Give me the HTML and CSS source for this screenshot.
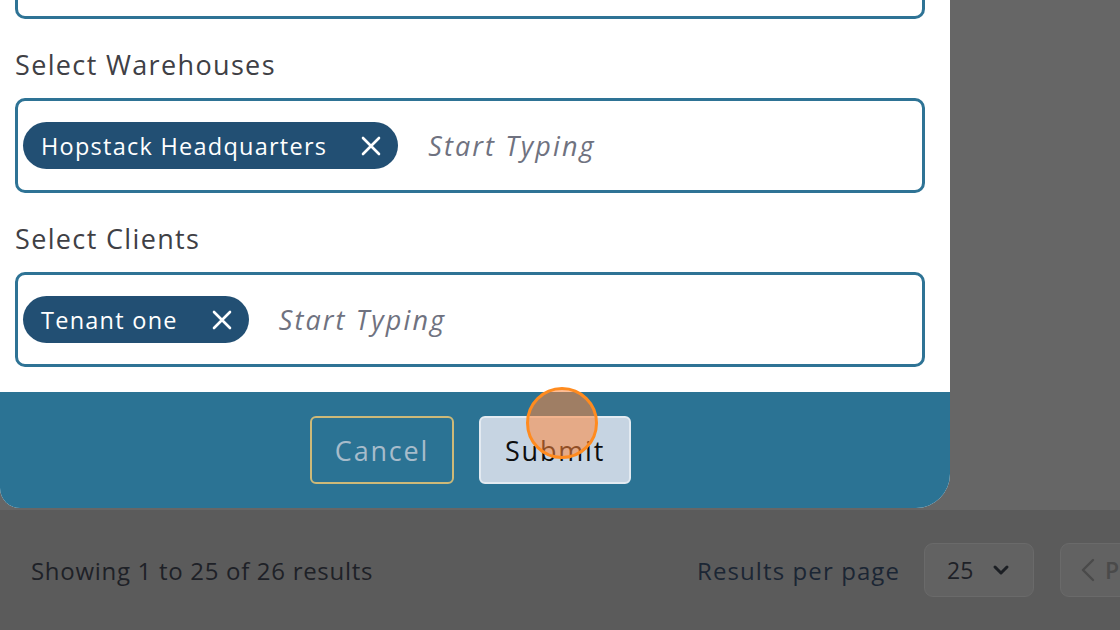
FILE: index.html
```html
<!DOCTYPE html>
<html lang="en">
<head>
    <meta charset="UTF-8">
    <title>Select Warehouses and Clients</title>
    <link rel="stylesheet" href="styles.css">
</head>
<body>
    <div class="overlay">
        <div class="modal">
            <div class="modal-body">
                <!-- field above, scrolled out of view -->
                <div class="field-box field-cut"></div>

                <label class="field-label">Select Warehouses</label>
                <div class="field-box">
                    <span class="chip">Hopstack Headquarters
                        <svg class="chip-x" width="20" height="20" viewBox="0 0 20 20"><path d="M2 2L18 18M18 2L2 18" stroke="#fff" stroke-width="2.6" stroke-linecap="round"/></svg>
                    </span>
                    <span class="placeholder">Start Typing</span>
                </div>

                <label class="field-label">Select Clients</label>
                <div class="field-box">
                    <span class="chip">Tenant one
                        <svg class="chip-x" width="20" height="20" viewBox="0 0 20 20"><path d="M2 2L18 18M18 2L2 18" stroke="#fff" stroke-width="2.6" stroke-linecap="round"/></svg>
                    </span>
                    <span class="placeholder">Start Typing</span>
                </div>
            </div>

            <div class="modal-footer">
                <button class="btn btn-cancel">Cancel</button>
                <button class="btn btn-submit">Submit
                    <span class="click-mark"></span>
                </button>
            </div>
        </div>
    </div>

    <!-- pagination bar under the overlay -->
    <div class="pager">
        <span class="pager-count">Showing 1 to 25 of 26 results</span>
        <span class="pager-label">Results per page</span>
        <div class="per-page">25
            <svg width="18" height="12" viewBox="0 0 18 12"><path d="M3 3L9 9L15 3" fill="none" stroke="#1c1f24" stroke-width="3" stroke-linecap="round" stroke-linejoin="round"/></svg>
        </div>
        <div class="prev-btn">
            <svg width="14" height="24" viewBox="0 0 14 24"><path d="M12 2L2 12L12 22" fill="none" stroke="#4a4a4a" stroke-width="2.4" stroke-linecap="round" stroke-linejoin="round"/></svg>
            <span>Previous</span>
        </div>
    </div>
</body>
</html>
```

FILE: styles.css
```css
body {
    margin: 0;
    padding: 0;
    background-color: #5b5b5b;
    font-family: "Open Sans", "DejaVu Sans", sans-serif;
    overflow: hidden;
}

.overlay {
    background-color: #666666;
    height: 510px;
}

.modal {
    width: 950px;
    height: 508px;
    background-color: #ffffff;
    border-radius: 0 0 34px 20px;
    overflow: hidden;
    display: flex;
    flex-direction: column;
}

.modal-body {
    padding: 0 25px 0 15px;
    flex: 1;
}

.field-label {
    display: block;
    font-size: 27px;
    color: #3f4045;
    letter-spacing: 1.35px;
    margin: 30px 0 17px 0;
    line-height: 32px;
}

.field-box {
    height: 89px;
    border: 3px solid #2e7395;
    border-radius: 10px;
    display: flex;
    align-items: center;
    padding-left: 5px;
    box-sizing: content-box;
}

.field-cut {
    height: 16px;
    border-top: none;
    border-radius: 0 0 10px 10px;
}

.chip {
    display: inline-flex;
    align-items: center;
    height: 47px;
    padding: 0 17px 0 18px;
    background-color: #224f73;
    color: #ffffff;
    font-size: 23.5px;
    letter-spacing: 1.25px;
    border-radius: 24px;
}

.chip-x {
    margin-left: 34px;
}

.placeholder {
    margin-left: 30px;
    font-size: 27px;
    font-style: italic;
    color: #6f7280;
    letter-spacing: 2.1px;
}

.modal-footer {
    height: 116px;
    background-color: #2b7394;
    display: flex;
    justify-content: center;
    align-items: center;
    gap: 25px;
    padding-right: 9px;
}

.btn {
    height: 68px;
    font-family: "Open Sans", "DejaVu Sans", sans-serif;
    font-size: 27px;
    letter-spacing: 1.8px;
    border-radius: 6px;
    padding: 0;
    position: relative;
}

.btn-cancel {
    width: 144px;
    background-color: transparent;
    border: 2px solid #cdb978;
    color: #a7bccb;
}

.btn-submit {
    width: 152px;
    background-color: #c6d4e2;
    border: 2px solid #e3eaf1;
    color: #0d0d0d;
}

.click-mark {
    position: absolute;
    left: 45px;
    top: -31px;
    width: 66px;
    height: 66px;
    border: 3px solid #ff8b1f;
    border-radius: 50%;
    background-color: rgba(255, 135, 60, 0.55);
}

.pager {
    height: 120px;
    display: flex;
    align-items: center;
    padding-left: 31px;
    white-space: nowrap;
}

.pager > * {
    flex-shrink: 0;
}

.pager-count {
    font-size: 24px;
    color: #1e2127;
    letter-spacing: 0.7px;
    width: 666px;
}

.pager-label {
    font-size: 24px;
    color: #1b2634;
    letter-spacing: 1.1px;
    width: 227px;
}

.per-page {
    width: 86px;
    height: 52px;
    padding-left: 22px;
    background-color: #626262;
    border: 1px solid #6a6a6a;
    border-radius: 9px;
    display: flex;
    align-items: center;
    gap: 19px;
    font-size: 23px;
    color: #1e2127;
    margin-right: 26px;
}

.prev-btn {
    width: 120px;
    height: 52px;
    padding: 0 0 0 20px;
    background-color: #626262;
    border: 1px solid #6a6a6a;
    border-radius: 9px 0 0 9px;
    display: flex;
    align-items: center;
    gap: 10px;
    font-size: 23px;
    font-weight: 600;
    color: #4a4a4a;
    overflow: hidden;
}
```
